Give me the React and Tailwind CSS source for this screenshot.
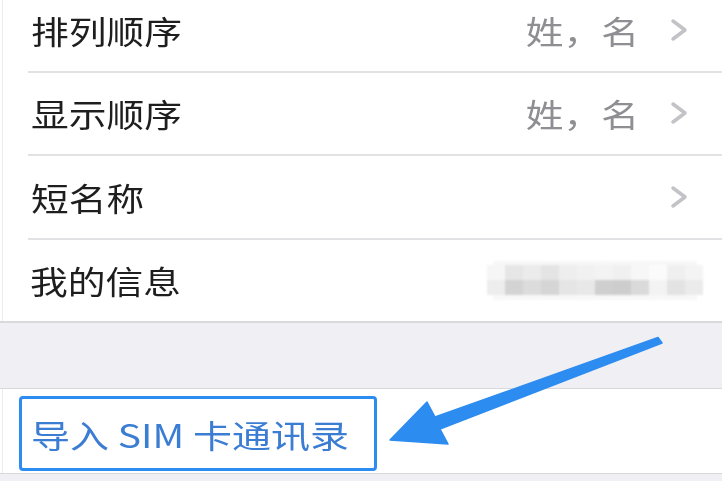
import React from 'react';

const rows = [
  { label: '排列顺序', value: '姓，名', chevron: true },
  { label: '显示顺序', value: '姓，名', chevron: true },
  { label: '短名称', value: '', chevron: true },
];

// pixelated (blurred) personal info
const topBlocks = ['bg-[#f6f6f6]', 'bg-[#e6e6e6]', 'bg-[#ebebeb]', 'bg-[#e4e4e4]', 'bg-[#eeeeee]', 'bg-[#f1f1f1]', 'bg-[#f3f3f3]', 'bg-[#f0f0f0]', 'bg-[#f7f7f7]', 'bg-[#fbfbfb]', 'bg-[#efefef]', 'bg-[#f4f4f4]'];
const bottomBlocks = ['bg-[#ededed]', 'bg-[#d3d3d3]', 'bg-[#dcdcdc]', 'bg-[#d5d5d5]', 'bg-[#e5e5e5]', 'bg-[#e8e8e8]', 'bg-[#cfcfcf]', 'bg-[#cdcdcd]', 'bg-[#dadada]', 'bg-[#f3f3f3]', 'bg-[#e3e3e3]', 'bg-[#ebebeb]'];

const Chevron = () => (
  <svg width="18" height="24" viewBox="0 0 18 24" className="shrink-0">
    <polyline points="3,3 15,12 3,21" fill="none" stroke="#c2c2c7" strokeWidth="3.5" strokeLinecap="round" strokeLinejoin="round" />
  </svg>
);

const Label = ({ children, className }) => (
  <span className={`inline-block text-[32px] leading-none ${className}`}>{children}</span>
);

export default function App() {
  return (
    <div
      className="relative w-[722px] h-[481px] overflow-hidden bg-white"
      style={{ fontFamily: '"Noto Sans CJK SC", "Noto Sans", sans-serif' }}
    >
      <div className="mt-[-11px]">
        {rows.map((row) => (
          <div key={row.label} className="ml-[2px] border-l border-[#ececec] pl-[25px]">
            <div className="h-[83.5px] flex items-center border-b-2 border-[#e2e2e5] pl-[3px] pr-[34px]">
              <Label className="origin-left scale-x-[1.18] text-[#1e1e1e]">{row.label}</Label>
              <div className="ml-auto flex items-center gap-[31px]">
                {row.value && <Label className="origin-right scale-x-[1.18] text-[#8e8e93]">{row.value}</Label>}
                {row.chevron && <Chevron />}
              </div>
            </div>
          </div>
        ))}

        <div className="h-[83.5px] flex items-center border-b-2 border-[#d9d9dd]">
          <div className="self-stretch ml-[2px] border-l border-[#ececec]" />
          <Label className="ml-[27px] origin-left scale-x-[1.18] text-[#1e1e1e]">我的信息</Label>
          <div className="ml-auto mr-[19px] flex flex-col blur-[1px]">
            <div className="h-[4px] mx-[6px] bg-[#f7f7f7]" />
            <div className="flex">
              {topBlocks.map((c, i) => (
                <div key={i} className={`w-[18px] h-[15px] ${c}`} />
              ))}
            </div>
            <div className="flex">
              {bottomBlocks.map((c, i) => (
                <div key={i} className={`w-[18px] h-[15px] ${c}`} />
              ))}
            </div>
            <div className="h-[5px] mx-[6px] bg-[#f8f8f8]" />
          </div>
        </div>
      </div>

      <div className="h-[66px] bg-[#efeff4] border-b border-[#d8d8dc]" />

      <div className="h-[84px] ml-[2px] border-l border-[#ececec] pt-[7px] pl-[16px]">
        <div className="w-[358px] h-[75px] border-[3px] border-[#2d8cf0] rounded-[4px] flex items-center pl-[9px]">
          <Label className="origin-left scale-x-[1.22] text-[#3b7dd3]">导入 SIM 卡通讯录</Label>
        </div>
      </div>

      <div className="h-[20px] bg-[#efeff4] border-t border-[#d8d8dc]" />

      <svg width="722" height="481" viewBox="0 0 722 481" className="absolute inset-0 pointer-events-none">
        <polygon
          points="390,440 427,402 435,417 658,337.5 662,343 440,429 448,444"
          fill="#2d8cf0"
          stroke="#2d8cf0"
          strokeWidth="1.5"
          strokeLinejoin="round"
        />
      </svg>
    </div>
  );
}
